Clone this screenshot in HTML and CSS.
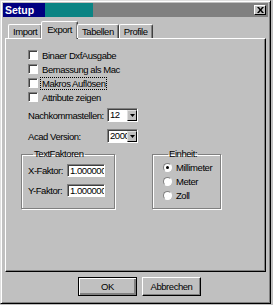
FILE: index.html
```html
<!DOCTYPE html>
<html>
<head>
<meta charset="utf-8">
<link rel="stylesheet" href="styles.css">
</head>
<body>
<div class="window">
  <div class="titlebar">
    <span class="title">Setup</span>
    <span class="close"><svg width="7" height="6" viewBox="0 0 7 6"><path d="M0 0h2l1.5 2 1.5-2h2l-2.5 3 2.5 3h-2l-1.5-2-1.5 2h-2l2.5-3z" fill="#000"/></svg></span>
  </div>
  <div class="client">
    <div class="tabs">
      <div class="tab">Import</div>
      <div class="tab active">Export</div>
      <div class="tab">Tabellen</div>
      <div class="tab">Profile</div>
    </div>
    <div class="panel">
      <div class="checks">
        <label class="check"><span class="box"></span><span>Binaer DxfAusgabe</span></label>
        <label class="check"><span class="box"></span><span>Bemassung als Mac</span></label>
        <label class="check"><span class="box"></span><span class="focus">Makros Auflösen</span></label>
        <label class="check"><span class="box"></span><span>Attribute zeigen</span></label>
      </div>
      <div class="field-row first">
        <span class="lbl">Nachkommastellen:</span>
        <span class="combo"><span class="val">12</span><span class="drop"><svg width="5" height="3" viewBox="0 0 5 3"><path d="M0 0h5l-2.5 3z" fill="#000"/></svg></span></span>
      </div>
      <div class="field-row second">
        <span class="lbl">Acad Version:</span>
        <span class="combo"><span class="val">2000</span><span class="drop"><svg width="5" height="3" viewBox="0 0 5 3"><path d="M0 0h5l-2.5 3z" fill="#000"/></svg></span></span>
      </div>
      <div class="groups">
        <fieldset class="group factors">
          <legend>TextFaktoren</legend>
          <div class="frow"><span class="flbl">X-Faktor:</span><span class="input">1.000000</span></div>
          <div class="frow"><span class="flbl">Y-Faktor:</span><span class="input">1.000000</span></div>
        </fieldset>
        <fieldset class="group unit">
          <legend>Einheit:</legend>
          <label class="radio"><span class="circle on"></span><span>Millimeter</span></label>
          <label class="radio"><span class="circle"></span><span>Meter</span></label>
          <label class="radio"><span class="circle"></span><span>Zoll</span></label>
        </fieldset>
      </div>
    </div>
    <div class="buttons">
      <button class="btn default">OK</button>
      <button class="btn">Abbrechen</button>
    </div>
  </div>
</div>
</body>
</html>
```
FILE: styles.css
```css
* { box-sizing: border-box; }
html, body { margin: 0; padding: 0; background: #c0c0c0; }
body {
  font-family: "Liberation Sans", Arial, sans-serif;
  font-size: 9.5px;
  letter-spacing: -0.45px;
  color: #000;
}
.window {
  width: 271px;
  height: 304px;
  border: 1px solid;
  border-color: #dfdfdf #000 #000 #dfdfdf;
  box-shadow: inset 1px 1px 0 #fff, inset -1px -1px 0 #808080;
  padding: 2px;
  display: flex;
  flex-direction: column;
}
.titlebar {
  height: 14px;
  background: linear-gradient(to right, #000080 0 42px, #0a8484 42px 90px, #808080 90px);
  display: flex;
  align-items: center;
  justify-content: space-between;
  padding: 0 2px 0 2px;
}
.title {
  color: #fff;
  font-weight: bold;
  font-size: 10.5px;
  letter-spacing: 0;
}
.close {
  width: 12px;
  height: 10px;
  background: #c0c0c0;
  border: 1px solid;
  border-color: #fff #000 #000 #fff;
  display: flex;
  align-items: center;
  justify-content: center;
}
.client {
  flex: 1;
  display: flex;
  flex-direction: column;
  padding: 4px 2px 0 2px;
}
.tabs {
  display: flex;
  align-items: flex-end;
  height: 17px;
  padding-left: 3px;
  position: relative;
  z-index: 1;
}
.tab {
  height: 14px;
  padding: 0 4px;
  line-height: 13px;
  white-space: nowrap;
  border: 1px solid;
  border-bottom: none;
  border-color: #fff #404040 transparent #fff;
  border-radius: 2px 2px 0 0;
  box-shadow: inset -1px 0 0 #808080;
}
.tab.active {
  height: 18px;
  margin-bottom: -1px;
  margin-left: -1px;
  margin-right: -1px;
  padding: 0 5px;
  background: #c0c0c0;
  line-height: 15px;
}
.panel {
  height: 234px;
  border: 1px solid;
  border-color: #fff #000 #000 #fff;
  box-shadow: inset -1px -1px 0 #808080;
  padding: 9px 0 0 15px;
  display: flex;
  flex-direction: column;
}
.checks {
  display: flex;
  flex-direction: column;
  padding-left: 7px;
}
.check {
  height: 14px;
  display: flex;
  align-items: center;
  gap: 4px;
  white-space: nowrap;
}
.box {
  flex-shrink: 0;
  width: 10px;
  height: 10px;
  background: #fff;
  border: 1px solid;
  border-color: #808080 #fff #fff #808080;
  box-shadow: inset 1px 1px 0 #404040;
}
.focus {
  outline: 1px dotted #000;
  outline-offset: 0;
  padding: 0 1px;
  margin-left: -1px;
}
.field-row {
  display: flex;
  align-items: center;
  height: 14px;
  padding-left: 7px;
  white-space: nowrap;
}
.field-row.first { margin-top: 4px; }
.field-row.second { margin-top: 7px; }
.lbl { width: 79px; flex-shrink: 0; }
.combo {
  flex-shrink: 0;
  width: 31px;
  height: 14px;
  background: #fff;
  border: 1px solid;
  border-color: #808080 #fff #fff #808080;
  box-shadow: inset 1px 1px 0 #404040;
  display: flex;
  align-items: stretch;
  overflow: hidden;
}
.val {
  flex: 1;
  min-width: 0;
  padding-left: 2px;
  line-height: 12px;
  overflow: hidden;
  white-space: nowrap;
}
.drop {
  flex-shrink: 0;
  width: 10px;
  margin: 1px 0 0 0;
  background: #c0c0c0;
  border: 1px solid;
  border-color: #dfdfdf #000 #000 #dfdfdf;
  display: flex;
  align-items: center;
  justify-content: center;
}
.groups {
  display: flex;
  gap: 37px;
  margin-top: 5px;
}
.group {
  margin: 0;
  padding: 0;
  height: 61px;
  border: 1px solid #808080;
  box-shadow: 1px 1px 0 #fff, inset 1px 1px 0 #fff;
}
.group legend {
  padding: 0 1px;
  margin-left: 5px;
  line-height: 12px;
  white-space: nowrap;
}
.factors {
  width: 94px;
  padding: 4px 0 0 6px;
}
.frow {
  display: flex;
  align-items: center;
  height: 13px;
  margin-bottom: 7px;
  white-space: nowrap;
}
.flbl { width: 39px; flex-shrink: 0; }
.input {
  flex-shrink: 0;
  width: 38px;
  height: 13px;
  background: #fff;
  border: 1px solid;
  border-color: #808080 #fff #fff #808080;
  box-shadow: inset 1px 1px 0 #404040;
  padding-left: 2px;
  line-height: 11px;
  overflow: hidden;
  white-space: nowrap;
}
.unit {
  width: 69px;
  padding: 0 0 0 10px;
}
.radio {
  display: flex;
  align-items: center;
  gap: 4px;
  height: 14px;
  white-space: nowrap;
}
.circle {
  flex-shrink: 0;
  width: 9px;
  height: 9px;
  border-radius: 50%;
  background: #fff;
  border: 1px solid;
  border-color: #808080 #fff #fff #808080;
  display: flex;
  align-items: center;
  justify-content: center;
}
.circle.on::after {
  content: "";
  width: 3px;
  height: 3px;
  border-radius: 50%;
  background: #000;
}
.buttons {
  display: flex;
  justify-content: center;
  gap: 5px;
  margin-top: 5px;
  padding-left: 8px;
}
.btn {
  width: 59px;
  height: 19px;
  font: inherit;
  letter-spacing: inherit;
  color: #000;
  background: #c0c0c0;
  border: 1px solid;
  border-color: #fff #000 #000 #fff;
  box-shadow: inset -1px -1px 0 #808080;
  padding: 0;
}
.btn.default {
  border: 1px solid #000;
  box-shadow: inset 1px 1px 0 #fff, inset -2px -2px 0 #808080;
}
```
